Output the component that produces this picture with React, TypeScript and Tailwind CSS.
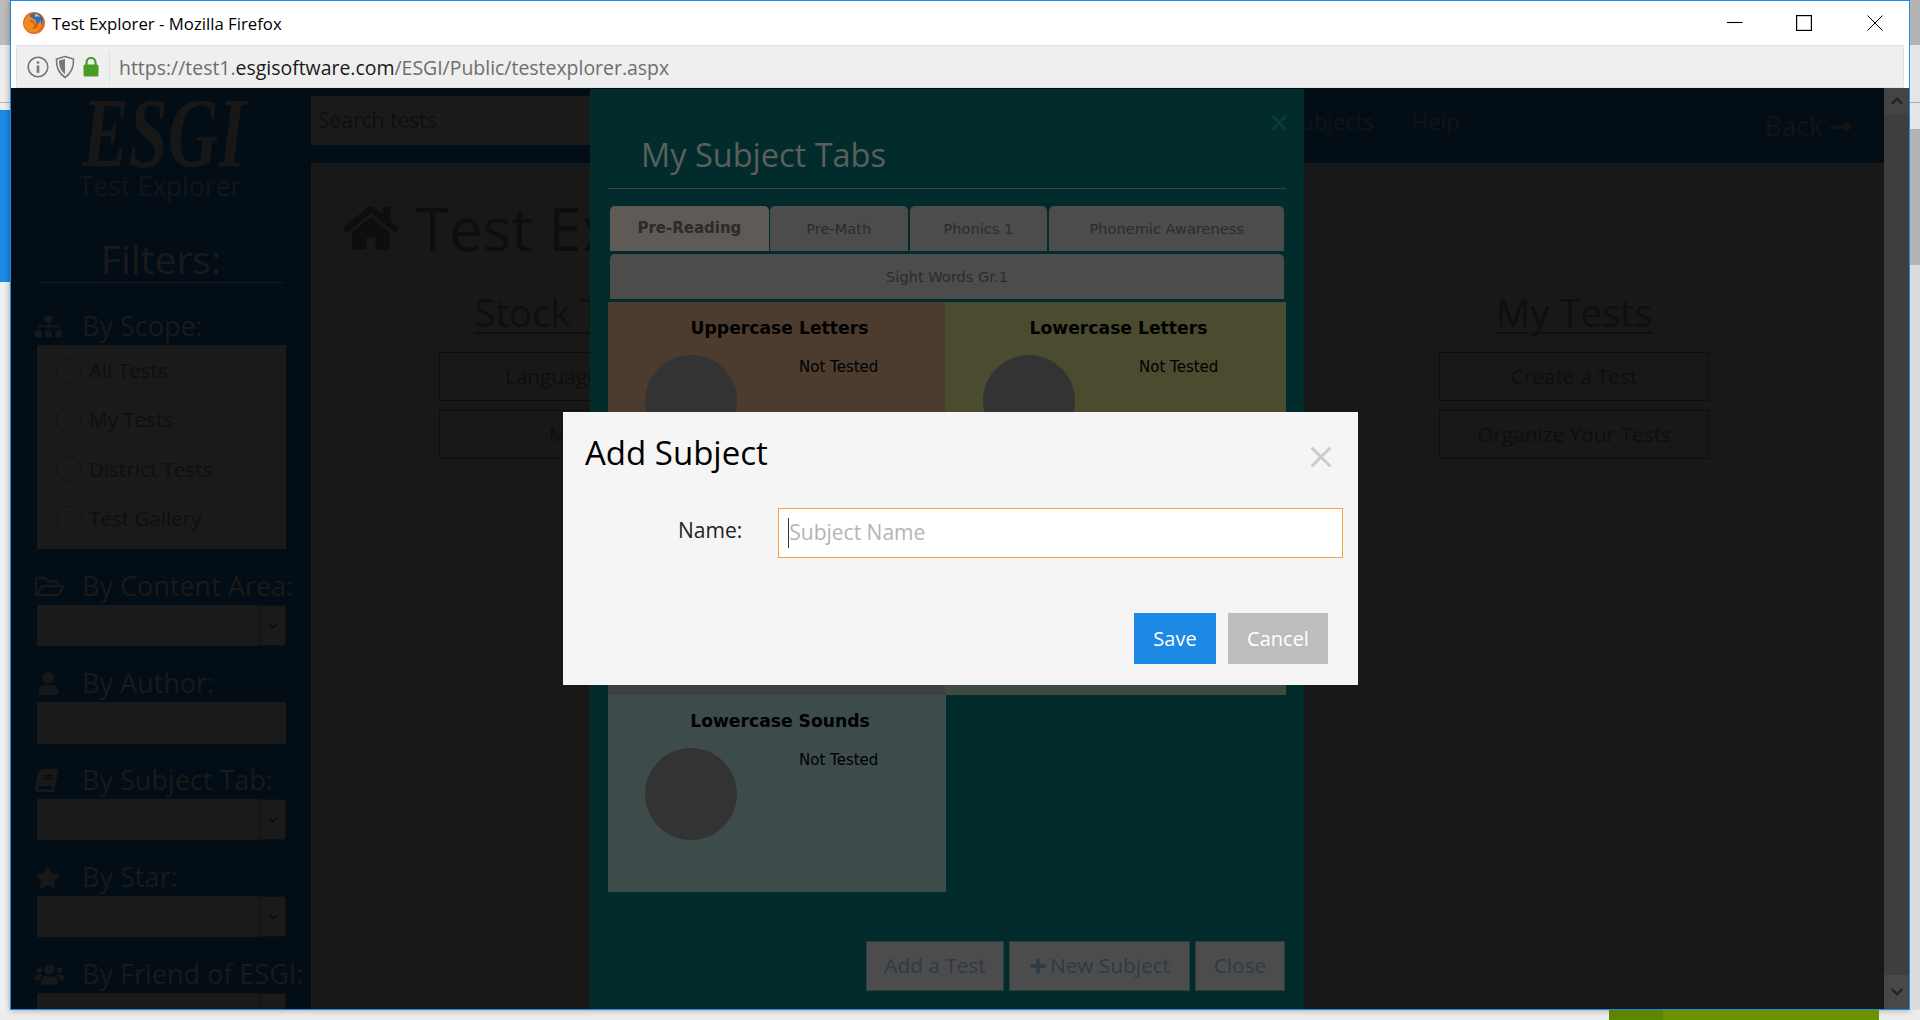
import {
  FaBook,
  FaChevronDown,
  FaChevronUp,
  FaHome,
  FaLongArrowAltRight,
  FaPlus,
  FaRegFolderOpen,
  FaSitemap,
  FaStar,
  FaUser,
  FaUsers,
} from 'react-icons/fa'
import { FiChevronDown } from 'react-icons/fi'
import type { ReactNode } from 'react'

const SCOPES = ['All Tests', 'My Tests', 'District Tests', 'Test Gallery']

function FirefoxIcon() {
  return (
    <svg viewBox="0 0 24 24" className="h-[24px] w-[24px] shrink-0">
      <circle cx="12" cy="12" r="11" fill="#e8661f" />
      <circle cx="13.5" cy="9.5" r="7.5" fill="#2a6fb8" />
      <path d="M3 9c1-3 3-5 5-6-1 2 0 3 2 4 3 1 5 3 4 6 2 0 4-1 4-4 2 3 2 7-1 10-3 3-8 3-11 1-4-2-5-7-3-11z" fill="#f08a24" />
      <path d="M6 11c2-1 5 0 6 2 1 2 0 4-2 5 3 0 6-2 6-5-2 1-3 0-4-2-1-2-4-2-6 0z" fill="#e2491c" />
      <path d="M13 3c2 0 4 1 5 3-2-1-3-1-5 0z" fill="#f6c33b" />
    </svg>
  )
}

function InfoIcon() {
  return (
    <svg viewBox="0 0 22 22" className="h-[22px] w-[22px]">
      <circle cx="11" cy="11" r="9.8" fill="none" stroke="#777" strokeWidth="1.6" />
      <circle cx="11" cy="6.6" r="1.4" fill="#777" />
      <rect x="9.7" y="9.4" width="2.6" height="7.4" fill="#777" />
    </svg>
  )
}

function ShieldIcon() {
  return (
    <svg viewBox="0 0 20 24" className="h-[24px] w-[20px]">
      <path d="M10 1.5 18.5 4c.4 8-1.800 14-8.500 18.500C3.300 18 1.100 12 1.500 4z" fill="none" stroke="#777" strokeWidth="1.6" />
      <path d="M10 4 4 5.600c0 6 1.500 10 6 13.800z" fill="#777" />
    </svg>
  )
}

function LockIcon() {
  return (
    <svg viewBox="0 0 16 20" className="h-[20px] w-[16px]">
      <path d="M3.500 8V5.500a4.500 4.500 0 0 1 9 0V8" fill="none" stroke="#4a9b22" strokeWidth="2.200" />
      <rect x="0.500" y="7.500" width="15" height="12" rx="1.500" fill="#4a9b22" />
    </svg>
  )
}

function WindowControls() {
  return (
    <div className="ml-auto mr-[26px] flex items-center">
      <svg viewBox="0 0 16 16" className="h-[16px] w-[16px]">
        <path d="M0 7.500h15.500" stroke="#000" strokeWidth="1.100" />
      </svg>
      <svg viewBox="0 0 16 16" className="ml-[53px] h-[16px] w-[16px]">
        <rect x="0.600" y="0.600" width="14.800" height="14.800" fill="none" stroke="#000" strokeWidth="1.200" />
      </svg>
      <svg viewBox="0 0 16 16" className="ml-[55px] h-[16px] w-[16px]">
        <path d="M.5.500l15 15M15.500.500l-15 15" stroke="#000" strokeWidth="1" />
      </svg>
    </div>
  )
}

function FilterHeading({ icon, label }: { icon: ReactNode; label: string }) {
  return (
    <div className="flex h-[38px] items-center whitespace-nowrap text-[27px] text-[#1a1a1a]">
      <span className="flex w-[71px] pl-[24px] text-[#181818]">{icon}</span>
      <span>{label}</span>
    </div>
  )
}

function FilterSelect({ className = 'h-[41px]' }: { className?: string }) {
  return (
    <div className={`ml-[26px] flex w-[249px] justify-end bg-[#1a1a1a] ${className}`}>
      <div className="flex h-[41px] w-[27px] items-center justify-center border-x border-y border-[#101010] text-[#0a0a0a]">
        <FiChevronDown size={14} />
      </div>
    </div>
  )
}

function Sidebar() {
  return (
    <aside className="w-[300px] shrink-0 overflow-hidden bg-[#020d15]">
      <div className="flex h-[80px] items-center justify-center pl-[6px] pt-[10px] font-['Liberation_Serif',serif] text-[100px] font-bold italic leading-[70px] text-[#171717]">
        <span className="inline-block scale-x-[0.7]">ESGI</span>
      </div>
      <div className="flex h-[38px] items-center justify-center pr-[2px] text-[26.600px] text-[#141518]">Test Explorer</div>
      <div className="mt-[30px] flex h-[46px] items-center justify-center text-[39px] text-[#1a1a1a]">Filters:</div>
      <div className="ml-[27px] h-px w-[246px] bg-[#161a1e]" />
      <div className="mt-[24px]">
        <FilterHeading icon={<FaSitemap size={27} />} label="By Scope:" />
        <div className="ml-[26px] flex h-[204px] w-[249px] flex-col gap-[21.500px] bg-[#1a1a1a] pl-[19px] pt-[11px]">
          {SCOPES.map((scope) => (
            <div key={scope} className="flex h-[28px] items-center text-[20.600px] text-[#0f0f0f]">
              <span className="h-[26px] w-[26px] rounded-full border border-[#141414]" />
              <span className="ml-[7px]">{scope}</span>
            </div>
          ))}
        </div>
      </div>
      <div className="mt-[18px]">
        <FilterHeading icon={<FaRegFolderOpen size={29} />} label="By Content Area:" />
        <FilterSelect />
      </div>
      <div className="mt-[18px]">
        <FilterHeading icon={<FaUser size={23} className="ml-[2px]" />} label="By Author:" />
        <div className="ml-[26px] h-[42px] w-[249px] bg-[#1a1a1a]" />
      </div>
      <div className="mt-[17px]">
        <FilterHeading icon={<FaBook size={23} className="-skew-x-12" />} label="By Subject Tab:" />
        <FilterSelect />
      </div>
      <div className="mt-[18px]">
        <FilterHeading icon={<FaStar size={25} />} label="By Star:" />
        <FilterSelect />
      </div>
      <div className="mt-[18px]">
        <FilterHeading icon={<FaUsers size={29} />} label="By Friend of ESGI:" />
        <FilterSelect className="h-[41px]" />
      </div>
    </aside>
  )
}

function OutlineButton({ children }: { children: ReactNode }) {
  return (
    <div className="flex h-[49px] w-[270px] items-center justify-center border border-[#0e0e0e] text-[20.800px] text-[#0e0e0e]">
      {children}
    </div>
  )
}

function TestColumn({ title, items, className }: { title: string; items: string[]; className: string }) {
  return (
    <div className={`flex w-[270px] flex-col items-center ${className}`}>
      <h2 className="h-[50px] text-[38.400px] leading-[44px] whitespace-nowrap text-[#0f0f0f] underline decoration-[2px] underline-offset-[5px]">
        {title}
      </h2>
      <div className="mt-[12px] flex flex-col gap-[9px]">
        {items.map((item) => (
          <OutlineButton key={item}>{item}</OutlineButton>
        ))}
      </div>
    </div>
  )
}

function TopBar() {
  return (
    <div className="flex h-[75px] shrink-0 bg-[#020d15]">
      <div className="mt-[8px] flex h-[49px] w-[600px] items-center bg-[#1a1a1a] pl-[7px] text-[21px] text-[#0f0f0f]">
        Search tests
      </div>
      <div className="ml-auto mr-[305px] flex h-[66px] items-center gap-[38px] text-[22px] text-[#141414]">
        <span>My Subjects</span>
        <span>Help</span>
      </div>
      <div className="mr-[31px] flex h-[78px] items-center gap-[6px] text-[26.500px] text-[#141414]">
        Back
        <FaLongArrowAltRight size={24} />
      </div>
    </div>
  )
}

function SubjectCard({
  title,
  className,
  bodyClass = 'pl-[37px]',
  statusClass = 'ml-[62px]',
}: {
  title: string
  className: string
  bodyClass?: string
  statusClass?: string
}) {
  return (
    <div className={`h-[197px] text-black ${className}`}>
      <div className="flex h-[53px] items-center justify-center pl-[6px] text-[17.200px] font-bold">{title}</div>
      <div className={`flex ${bodyClass}`}>
        <div className="h-[92px] w-[92px] rounded-full bg-[#333333]" />
        <div className={`mt-[2px] text-[15px] leading-[20px] ${statusClass}`}>Not Tested</div>
      </div>
    </div>
  )
}

function SubjectPanel() {
  return (
    <div className="absolute bottom-0 left-[579px] top-px z-10 flex w-[714px] flex-col bg-[#022c2b] px-[18px]">
      <span className="absolute right-[15px] top-[16px] text-[34px] leading-none text-[#0b3b3a]">×</span>
      <div className="flex h-[100px] shrink-0 items-end border-b border-[#3d4443] pb-[8px] pl-[33px] text-[32.500px] text-[#5a5f5e]">
        My Subject Tabs
      </div>
      <div className="mt-[17px] px-[2px] font-['DejaVu_Sans',sans-serif] text-[14.600px] text-[#2b2b2b]">
        <div className="flex h-[45px]">
          <div className="flex w-[159px] items-center justify-center rounded-t-[5px] bg-[#5e5a55] text-[15px] font-bold">Pre-Reading</div>
          <div className="ml-px flex w-[138px] items-center justify-center rounded-t-[5px] bg-[#4c4c4c]">Pre-Math</div>
          <div className="ml-[2px] flex w-[138px] items-center justify-center rounded-t-[5px] bg-[#4c4c4c]">Phonics 1</div>
          <div className="ml-[2px] flex w-[235px] items-center justify-center rounded-t-[5px] bg-[#4c4c4c]">Phonemic Awareness</div>
        </div>
        <div className="mt-[3px] flex h-[45px] items-center justify-center rounded-t-[5px] bg-[#4c4c4c]">Sight Words Gr.1</div>
      </div>
      <div className="mt-[3px] grid grid-cols-[337px_341px] font-['DejaVu_Sans',sans-serif]">
        <SubjectCard title="Uppercase Letters" className="bg-[#4c3c2f]" />
        <SubjectCard title="Lowercase Letters" className="bg-[#4b4b2f]" bodyClass="pl-[38px]" statusClass="ml-[64px]" />
        <div className="h-[196px] bg-[#414040]" />
        <div className="h-[196px] bg-[#3e4b3e]" />
        <SubjectCard title="Lowercase Sounds" className="w-[338px] bg-[#3d4b4b]" />
      </div>
      <div className="mb-[18px] mt-auto flex justify-end gap-[5px] pr-px text-[20.800px] text-[#2e3a45]">
        <div className="flex h-[50px] w-[138px] items-center justify-center border border-[#2c3e3e] bg-[#4c4c4c]">Add a Test</div>
        <div className="flex h-[50px] w-[181px] items-center justify-center gap-[3px] border border-[#2c3e3e] bg-[#4c4c4c]">
          <FaPlus size={18} />
          New Subject
        </div>
        <div className="flex h-[50px] w-[90px] items-center justify-center border border-[#2c3e3e] bg-[#4c4c4c]">Close</div>
      </div>
    </div>
  )
}

function AddSubjectDialog() {
  return (
    <div className="absolute left-[563px] top-[412px] z-20 flex h-[273px] w-[795px] flex-col bg-[#f5f5f5] text-black">
      <div className="flex h-[82px] items-start justify-between pl-[22px] pr-[26px] pt-[17px]">
        <span className="text-[33px] leading-[48px]">Add Subject</span>
        <svg viewBox="0 0 22 22" className="mt-[17px] h-[22px] w-[22px]">
          <path d="M1.500 1.500l19 19M20.500 1.500l-19 19" stroke="#cccccc" strokeWidth="3" />
        </svg>
      </div>
      <div className="mt-[14px] flex h-[50px] items-start">
        <span className="ml-[115px] mt-[6px] text-[21px] leading-[32px] text-[#222]">Name:</span>
        <div className="ml-[36px] flex h-[50px] w-[565px] items-center border border-[#f7a246] bg-white pl-[9px]">
          <span className="h-[30px] w-px bg-[#333]" />
          <span className="text-[21px] text-[#b5b5b5]">Subject Name</span>
        </div>
      </div>
      <div className="mt-[55px] flex justify-end gap-[12px] pr-[30px] text-[20px] text-white">
        <div className="flex h-[51px] w-[82px] items-center justify-center bg-[#1e88e5]">Save</div>
        <div className="flex h-[51px] w-[100px] items-center justify-center bg-[#bdbdbd]">Cancel</div>
      </div>
    </div>
  )
}

function Scrollbar() {
  return (
    <div className="flex w-[25px] shrink-0 flex-col bg-[#3e3e3e] text-[#222]">
      <div className="flex h-[26px] items-center justify-center bg-[#444]">
        <FaChevronUp size={14} />
      </div>
      <div className="flex-1" />
      <div className="flex h-[34px] items-center justify-center bg-[#484848]">
        <FaChevronDown size={14} />
      </div>
    </div>
  )
}

export default function App() {
  return (
    <div className="relative flex h-[1020px] w-[1920px] flex-col overflow-hidden bg-[#ececec] font-['Open_Sans',sans-serif]">
      <div className="flex h-[1010px]">
        <div className="flex w-[10px] shrink-0 flex-col">
          <div className="h-[45px] bg-[#bcbcbc]" />
          <div className="h-[57px] bg-[#ededed]" />
          <div className="h-px bg-[#b5b5b5]" />
          <div className="h-[7px] bg-[#eeeeee]" />
          <div className="h-[172px] bg-[#1e88e5]" />
          <div className="flex-1 bg-[#f0f0f0]" />
        </div>
        <div className="flex w-[1900px] shrink-0 flex-col border border-[#1e88e5] bg-white shadow-[0_0_6px_rgba(0,0,0,0.35)]">
          <div className="flex h-[44px] shrink-0 items-center pl-[11px]">
            <FirefoxIcon />
            <span className="ml-[6px] mt-[2px] text-[16.750px] text-black">Test Explorer - Mozilla Firefox</span>
            <WindowControls />
          </div>
          <div className="mx-[5px] flex h-[43px] shrink-0 items-center border-x border-y border-[#e2e2e2] bg-[#efefef] pl-[10px]">
            <InfoIcon />
            <span className="ml-[6px] flex"><ShieldIcon /></span>
            <span className="ml-[8px] flex"><LockIcon /></span>
            <span className="ml-[10px] h-[32px] w-px bg-[#dedede]" />
            <span className="ml-[9px] mt-[2px] text-[19.450px] text-[#6e6e6e]">
              https://test1.<span className="text-[#1a1a1a]">esgisoftware.com</span>/ESGI/Public/testexplorer.aspx
            </span>
          </div>
          <div className="relative flex min-h-0 flex-1">
            <Sidebar />
            <div className="flex min-w-0 flex-1 flex-col bg-[#181818]">
              <TopBar />
              <div className="ml-[32px] mt-[30px] flex h-[70px] shrink-0 items-center text-[#0e0e0e]">
                <FaHome size={56} />
                <span className="ml-[17px] text-[60px]">Test Explorer</span>
              </div>
              <div className="mt-[27px] flex">
                <TestColumn title="Stock Tests" items={['Language Arts', 'Math']} className="ml-[128px]" />
                <TestColumn title="My Tests" items={['Create a Test', 'Organize Your Tests']} className="ml-auto mr-[175px]" />
              </div>
            </div>
            <Scrollbar />
            <SubjectPanel />
          </div>
        </div>
        <div className="flex w-[10px] shrink-0 flex-col">
          <div className="h-[45px] bg-[#b4b4b4]" />
          <div className="h-[57px] bg-[#e6e6e6]" />
          <div className="h-px bg-[#aaaaaa]" />
          <div className="h-[26px] bg-[#e6e6e6]" />
          <div className="h-[136px] bg-[#b4b4b4]" />
          <div className="flex-1 bg-[#dcdcdc]" />
        </div>
      </div>
      <div className="flex h-[10px]">
        <div className="ml-[1609px] w-[54px] bg-[#5f8400]" />
        <div className="w-[216px] bg-[#6c9200]" />
      </div>
      <AddSubjectDialog />
    </div>
  )
}
